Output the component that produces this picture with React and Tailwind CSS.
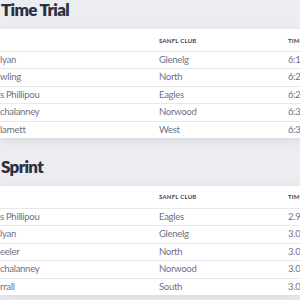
const sections = [
  {
    title: "Time Trial",
    rows: [
      ["lyan", "Glenelg", "6:16.4"],
      ["wling", "North", "6:27.1"],
      ["s Phillipou", "Eagles", "6:29.5"],
      ["chalanney", "Norwood", "6:30.2"],
      ["larnett", "West", "6:32.8"],
    ],
  },
  {
    title: "Sprint",
    rows: [
      ["s Phillipou", "Eagles", "2.951"],
      ["lyan", "Glenelg", "3.012"],
      ["eeler", "North", "3.018"],
      ["chalanney", "Norwood", "3.027"],
      ["rrall", "South", "3.043"],
    ],
  },
];

function ResultsTable({ title, rows }) {
  return (
    <section className="flex flex-col">
      <h2 className="h-[20px] pl-[1px] text-[17px] leading-[20px] font-extrabold tracking-[-0.04em] text-[#2c3042]">{title}</h2>
      <div className="mt-[9px] bg-white shadow-[0_2px_8px_rgba(60,64,90,0.12)]">
        <div className="grid grid-cols-[159px_129px_1fr] h-[22px] items-center text-[6px] font-bold tracking-[0.04em] uppercase text-[#3f4454]">
          <span></span>
          <span>SANFL Club</span>
          <span>Time</span>
        </div>
        {rows.map(([name, club, time]) => (
          <div
            key={name + club}
            className="grid grid-cols-[159px_129px_1fr] h-[17.4px] items-center border-t border-[#e7e8ee] text-[9.5px] tracking-[-0.03em] text-[#6b7287] whitespace-nowrap"
          >
            <span>{name}</span>
            <span>{club}</span>
            <span>{time}</span>
          </div>
        ))}
      </div>
    </section>
  );
}

export default function App() {
  return (
    <div
      className="w-[300px] h-[300px] overflow-hidden bg-[#ecedf1] flex flex-col gap-[19px]"
      style={{ fontFamily: "Lato, 'Liberation Sans', sans-serif" }}
    >
      {sections.map((s) => (
        <ResultsTable key={s.title} title={s.title} rows={s.rows} />
      ))}
    </div>
  );
}
